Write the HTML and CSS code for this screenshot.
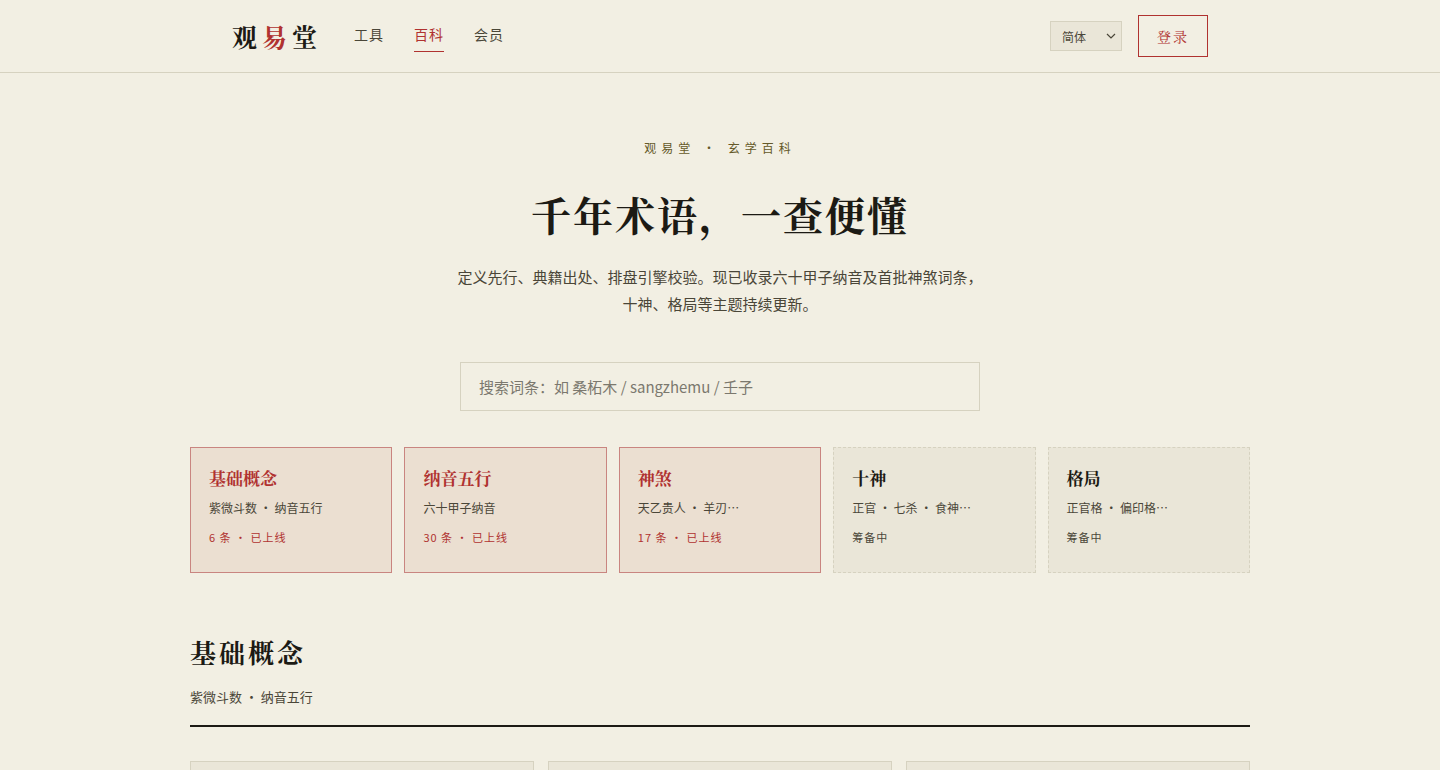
FILE: index.html
```html
<!DOCTYPE html>
<html lang="zh-CN">
<head>
  <meta charset="UTF-8">
  <meta name="viewport" content="width=device-width, initial-scale=1.0">
  <title>玄学百科 · 观易堂</title>
  <link rel="stylesheet" href="styles.css">
</head>
<body>
  <header class="site-header">
    <div class="header-inner">
      <a class="logo" href="#">观<span class="logo-accent">易</span>堂</a>
      <nav class="nav">
        <a class="nav-link" href="#">工具</a>
        <a class="nav-link active" href="#">百科</a>
        <a class="nav-link" href="#">会员</a>
      </nav>
      <div class="header-actions">
        <div class="lang">
          <select class="lang-select" aria-label="语言">
            <option>简体</option>
            <option>繁體</option>
          </select>
          <svg class="lang-arrow" width="10" height="6" viewBox="0 0 10 6" fill="none" stroke="currentColor" stroke-width="1.2" aria-hidden="true"><path d="M1 1l4 4 4-4"/></svg>
        </div>
        <button class="login" type="button">登录</button>
      </div>
    </div>
  </header>

  <main class="container">
    <section class="hero">
      <p class="eyebrow">观易堂 · 玄学百科</p>
      <h1 class="hero-title">千年术语，一查便懂</h1>
      <p class="hero-text">定义先行、典籍出处、排盘引擎校验。现已收录六十甲子纳音及首批神煞词条，十神、格局等主题持续更新。</p>
      <input class="search" type="search" placeholder="搜索词条：如 桑柘木 / sangzhemu / 壬子" aria-label="搜索词条">
    </section>

    <section class="topics">
      <a class="topic live" href="#jichu">
        <h2 class="topic-name">基础概念</h2>
        <p class="topic-desc">紫微斗数 · 纳音五行</p>
        <p class="topic-count">6 条 · 已上线</p>
      </a>
      <a class="topic live" href="#">
        <h2 class="topic-name">纳音五行</h2>
        <p class="topic-desc">六十甲子纳音</p>
        <p class="topic-count">30 条 · 已上线</p>
      </a>
      <a class="topic live" href="#">
        <h2 class="topic-name">神煞</h2>
        <p class="topic-desc">天乙贵人 · 羊刃…</p>
        <p class="topic-count">17 条 · 已上线</p>
      </a>
      <div class="topic">
        <h2 class="topic-name">十神</h2>
        <p class="topic-desc">正官 · 七杀 · 食神…</p>
        <p class="topic-count">筹备中</p>
      </div>
      <div class="topic">
        <h2 class="topic-name">格局</h2>
        <p class="topic-desc">正官格 · 偏印格…</p>
        <p class="topic-count">筹备中</p>
      </div>
    </section>

    <section class="group" id="jichu">
      <div class="group-head">
        <h2 class="group-title">基础概念</h2>
        <p class="group-desc">紫微斗数 · 纳音五行</p>
      </div>
      <div class="entries">
        <div class="entry"></div>
        <div class="entry"></div>
        <div class="entry"></div>
      </div>
    </section>
  </main>
</body>
</html>
```

FILE: styles.css
```css
:root {
  --paper: #f2efe3;
  --paper-dark: #eae6d8;
  --ink: #1c1a14;
  --ink-soft: #4a4638;
  --line: #d6d2c0;
  --red: #b03230;
  --olive: #655929;
  --serif: "Noto Serif CJK SC", "Noto Serif SC", "Liberation Serif", "Noto Sans CJK SC", serif;
  --sans: "Noto Sans CJK SC", "Noto Sans", sans-serif;
}

* {
  box-sizing: border-box;
}

html {
  overflow-x: hidden;
  scrollbar-width: none;
}

body {
  margin: 0;
  background: var(--paper);
  color: var(--ink);
  font-family: var(--sans);
}

h1, h2, p {
  margin: 0;
}

a {
  color: inherit;
  text-decoration: none;
}

/* header */
.site-header {
  border-bottom: 1px solid var(--line);
}

.header-inner {
  display: flex;
  align-items: center;
  gap: 32px;
  max-width: 1040px;
  height: 72px;
  margin: 0 auto;
  padding: 0 32px;
}

.logo {
  font-family: var(--serif);
  font-size: 25px;
  font-weight: 700;
  letter-spacing: 5px;
}

.logo-accent {
  color: var(--red);
}

.nav {
  display: flex;
  gap: 30px;
}

.nav-link {
  padding: 2px 0 5px;
  border-bottom: 1px solid transparent;
  color: var(--ink-soft);
  font-size: 14px;
  line-height: 24px;
  letter-spacing: 1px;
}

.nav-link.active {
  border-color: var(--red);
  color: var(--red);
}

.header-actions {
  display: flex;
  align-items: center;
  gap: 16px;
  margin-left: auto;
}

.lang {
  position: relative;
}

.lang-select {
  appearance: none;
  width: 72px;
  height: 30px;
  padding: 0 11px;
  border: 1px solid var(--line);
  border-radius: 0;
  background: var(--paper-dark);
  color: var(--ink-soft);
  font-family: var(--sans);
  font-size: 12px;
}

.lang-arrow {
  position: absolute;
  top: 12px;
  right: 6px;
  color: var(--ink-soft);
  pointer-events: none;
}

.login {
  height: 42px;
  padding: 0 18px;
  border: 1px solid var(--red);
  background: none;
  color: var(--red);
  font-family: var(--serif);
  font-size: 14px;
  letter-spacing: 2px;
}

/* hero */
.container {
  max-width: 1124px;
  margin: 0 auto;
  padding: 0 32px;
}

.hero {
  display: flex;
  flex-direction: column;
  align-items: center;
  padding: 65px 0 36px;
  text-align: center;
}

.eyebrow {
  color: var(--olive);
  font-size: 12px;
  line-height: 20px;
  letter-spacing: 5px;
}

.hero-title {
  margin-top: 26px;
  font-family: var(--serif);
  font-size: 40px;
  font-weight: 700;
  line-height: 60px;
  letter-spacing: 2px;
}

.hero-text {
  max-width: 530px;
  margin-top: 19px;
  color: var(--ink-soft);
  font-size: 15px;
  line-height: 27px;
}

.search {
  appearance: none;
  width: 100%;
  max-width: 520px;
  height: 49px;
  margin-top: 45px;
  padding: 0 18px;
  border: 1px solid var(--line);
  border-radius: 0;
  background: transparent;
  color: var(--ink);
  font-family: var(--sans);
  font-size: 15px;
}

.search::placeholder {
  color: #7b786e;
}

/* topics */
.topics {
  display: grid;
  grid-template-columns: repeat(5, 1fr);
  gap: 12px;
}

.topic {
  padding: 17px 18px 25px;
  border: 1px dashed var(--line);
  background: var(--paper-dark);
  color: var(--ink-soft);
}

.topic.live {
  border: 1px solid #c98580;
  background: #ebdfd1;
}

.topic-name {
  color: var(--ink);
  font-family: var(--serif);
  font-size: 17px;
  font-weight: 700;
  line-height: 26px;
}

.topic-desc {
  margin-top: 7px;
  font-size: 12px;
  line-height: 20px;
}

.topic-count {
  margin-top: 9px;
  font-size: 11px;
  line-height: 20px;
  letter-spacing: 1px;
}

.live .topic-name,
.live .topic-count {
  color: var(--red);
}

/* entry groups */
.group {
  padding-top: 59px;
}

.group-head {
  padding-bottom: 17px;
  border-bottom: 2px solid var(--ink);
}

.group-title {
  font-family: var(--serif);
  font-size: 26px;
  font-weight: 700;
  line-height: 40px;
  letter-spacing: 3px;
}

.group-desc {
  margin-top: 14px;
  color: var(--ink-soft);
  font-size: 13px;
  line-height: 22px;
}

.entries {
  display: grid;
  grid-template-columns: repeat(3, 1fr);
  gap: 14px;
  margin-top: 34px;
}

.entry {
  min-height: 140px;
  border: 1px solid var(--line);
  background: var(--paper-dark);
}
```
